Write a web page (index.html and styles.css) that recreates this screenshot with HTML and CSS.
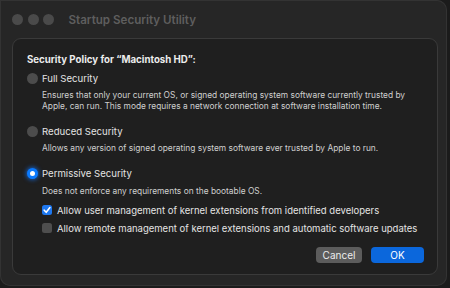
FILE: index.html
```html
<!DOCTYPE html>
<html lang="en">
<head>
<meta charset="UTF-8">
<title>Startup Security Utility</title>
<link rel="stylesheet" href="styles.css">
</head>
<body>
  <div class="window">
    <div class="titlebar">
      <span class="light"></span>
      <span class="light"></span>
      <span class="light"></span>
      <span class="title">Startup Security Utility</span>
    </div>

    <div class="sheet">
      <h1>Security Policy for “Macintosh HD”:</h1>

      <div class="option">
        <div class="option-label"><span class="radio"></span>Full Security</div>
        <p class="desc">Ensures that only your current OS, or signed operating system software currently trusted by<br>Apple, can run. This mode requires a network connection at software installation time.</p>
      </div>

      <div class="option">
        <div class="option-label"><span class="radio"></span>Reduced Security</div>
        <p class="desc">Allows any version of signed operating system software ever trusted by Apple to run.</p>
      </div>

      <div class="option permissive">
        <div class="option-label"><span class="radio checked"></span>Permissive Security</div>
        <p class="desc">Does not enforce any requirements on the bootable OS.</p>
        <div class="check-row">
          <span class="check on">
            <svg width="10" height="10" viewBox="0 0 10 10"><path d="M2.2 5.2 L4.2 7.3 L7.9 2.6" fill="none" stroke="#fff" stroke-width="1.6" stroke-linecap="round" stroke-linejoin="round"/></svg>
          </span>
          Allow user management of kernel extensions from identified developers
        </div>
        <div class="check-row">
          <span class="check"></span>
          Allow remote management of kernel extensions and automatic software updates
        </div>
      </div>

      <div class="buttons">
        <button class="btn">Cancel</button>
        <button class="btn primary">OK</button>
      </div>
    </div>
  </div>
</body>
</html>
```

FILE: styles.css
```css
body {
  margin: 0;
  background: #1b1b1b;
  font-family: Inter, "Noto Sans", sans-serif;
  color: #e2e2e2;
}

.window {
  width: 447px;
  height: 286px;
  background: #262626;
  border-radius: 0 10px 10px 10px;
  box-shadow: inset 0 0 0 1px #333;
  box-sizing: border-box;
  padding-top: 1px;
}

.titlebar {
  display: flex;
  align-items: center;
  height: 37px;
  padding-left: 12px;
}

.light {
  flex-shrink: 0;
  width: 11px;
  height: 11px;
  border-radius: 50%;
  background: #4a4a4a;
  margin-right: 4.5px;
}

.title {
  margin-left: 10px;
  font-size: 11.6px;
  font-weight: 600;
  color: #5e5e5e;
  white-space: nowrap;
}

.sheet {
  margin-left: 12px;
  width: 426px;
  height: 237px;
  box-sizing: border-box;
  background: #1f1f1f;
  border: 1px solid #3a3a3a;
  border-radius: 9px;
  padding: 14px 13px 0 14px;
}

h1 {
  margin: 0 0 1px;
  font-size: 9.7px;
  line-height: 14px;
  font-weight: 700;
  color: #ececec;
}

.option {
  margin-top: 4px;
}

.option + .option {
  margin-top: 12px;
}

.option-label {
  display: flex;
  align-items: center;
  height: 14px;
  font-size: 9.6px;
  color: #e4e4e4;
}

.radio {
  flex-shrink: 0;
  width: 11px;
  height: 11px;
  border-radius: 50%;
  background: #4c4c4c;
  margin: 0 4px 0 0;
  box-sizing: border-box;
}

.radio.checked {
  border: 3.5px solid #0a7aff;
  background: #fff;
  box-shadow: 0 0 4px 1px rgba(20, 120, 255, 0.7);
}

.desc {
  margin: 5px 0 0 15px;
  font-size: 8.4px;
  line-height: 11px;
  color: #cfcfcf;
  white-space: nowrap;
}

.permissive .desc {
  margin-top: 6px;
}

.check-row {
  display: flex;
  align-items: center;
  height: 14px;
  margin: 6px 0 0 15px;
  font-size: 9.5px;
  color: #e4e4e4;
  white-space: nowrap;
}

.check-row + .check-row {
  margin-top: 4px;
}

.check {
  flex-shrink: 0;
  display: flex;
  align-items: center;
  justify-content: center;
  width: 10px;
  height: 10px;
  border-radius: 2.5px;
  background: #4e4e4e;
  margin-right: 5px;
}

.check.on {
  background: #1e78f0;
}

.buttons {
  display: flex;
  justify-content: flex-end;
  gap: 9px;
  margin-top: 12px;
}

.btn {
  height: 16px;
  width: 46px;
  padding: 0;
  border: none;
  border-radius: 4px;
  background: #5c5c5c;
  color: #ececec;
  font-family: Inter, "Noto Sans", sans-serif;
  font-size: 10px;
}

.btn.primary {
  width: 53px;
  background: #0b67dc;
  color: #fff;
}
```
